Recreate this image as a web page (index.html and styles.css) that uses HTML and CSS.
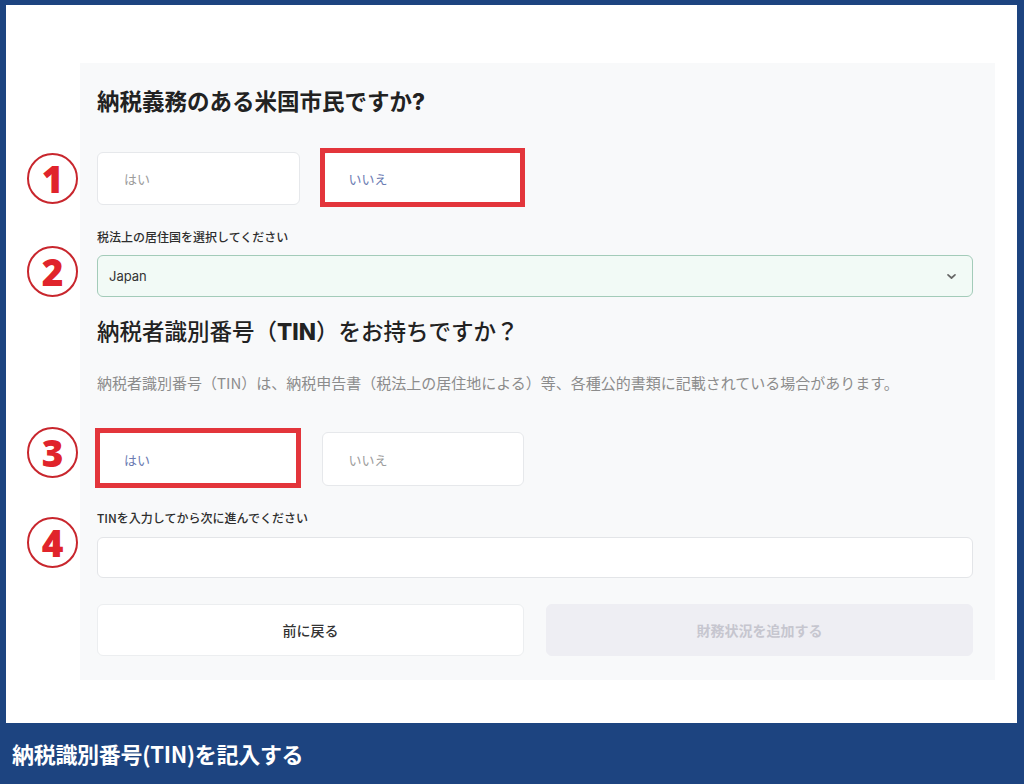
FILE: index.html
```html
<!DOCTYPE html>
<html lang="ja">
<head>
<meta charset="utf-8">
<title>納税識別番号(TIN)を記入する</title>
<link rel="stylesheet" href="styles.css">
</head>
<body>
<div class="frame">
  <main class="canvas">
    <section class="panel">
      <h1 class="q1">納税義務のある米国市民ですか<span class="qmark">?</span></h1>

      <div class="choices field">
        <span class="marker marker--one">1</span>
        <button class="choice">はい</button>
        <button class="choice is-picked">いいえ</button>
      </div>

      <div class="field">
        <span class="marker marker--two">2</span>
        <label class="label">税法上の居住国を選択してください</label>
        <div class="select">
          <span>Japan</span>
          <svg class="chev" width="11" height="7" viewBox="0 0 11 7"><path d="M2 1.8 L5.5 5 L9 1.8" fill="none" stroke="#666" stroke-width="1.7" stroke-linecap="round" stroke-linejoin="round"/></svg>
        </div>
      </div>

      <h2 class="q2">納税者識別番号（<b>TIN</b>）をお持ちですか？</h2>
      <p class="desc">納税者識別番号（TIN）は、納税申告書（税法上の居住地による）等、各種公的書類に記載されている場合があります。</p>

      <div class="choices choices--tin field">
        <span class="marker marker--three">3</span>
        <button class="choice is-picked">はい</button>
        <button class="choice">いいえ</button>
      </div>

      <div class="field">
        <span class="marker marker--four">4</span>
        <label class="label">TINを入力してから次に進んでください</label>
        <div class="input"></div>
      </div>

      <div class="actions">
        <button class="btn btn--back">前に戻る</button>
        <button class="btn btn--next">財務状況を追加する</button>
      </div>
    </section>
  </main>
  <footer class="bar">納税識別番号(TIN)を記入する</footer>
</div>
</body>
</html>
```

FILE: styles.css
```css
html, body {
  margin: 0;
  padding: 0;
}
body {
  width: 1024px;
  height: 784px;
  overflow: hidden;
  font-family: "Inter", "Noto Sans CJK JP", sans-serif;
  color: #222;
}
.frame {
  width: 1024px;
  height: 784px;
  box-sizing: border-box;
  background: #1d4480;
  padding: 5px 7px 0 6px;
  display: flex;
  flex-direction: column;
}
.canvas {
  height: 718px;
  background: #ffffff;
  padding: 58px 0 0 74px;
  box-sizing: border-box;
}
.panel {
  width: 915px;
  height: 617px;
  box-sizing: border-box;
  background: #f8f9fa;
  padding: 22px 22px 24px 17px;
}
.q1 {
  margin: 0;
  height: 30px;
  font-family: "Noto Sans CJK JP", sans-serif;
  font-size: 22.5px;
  line-height: 30px;
  font-weight: 700;
  color: #222;
}
.qmark {
  font-family: "Inter", sans-serif;
  font-weight: 800;
  line-height: 1;
}
.field {
  position: relative;
}
.choices {
  display: grid;
  grid-template-columns: repeat(4, 1fr);
  column-gap: 22px;
  margin-top: 37px;
  height: 53px;
}
.choices--tin {
  margin-top: 39px;
  height: 54px;
}
.choice {
  position: relative;
  margin: 0;
  padding: 0 0 0 26px;
  text-align: left;
  background: #ffffff;
  border: 1px solid #e6e8eb;
  border-radius: 6px;
  font-family: "Noto Sans CJK JP", sans-serif;
  font-size: 13px;
  color: #9c9c9c;
}
.choice.is-picked {
  color: #6b7bb2;
}
.choice.is-picked::after {
  content: "";
  position: absolute;
  top: -5px;
  bottom: -3px;
  left: -3px;
  right: -2px;
  border: 5px solid #e3353b;
}
.marker {
  position: absolute;
  left: -70px;
  width: 51px;
  height: 51px;
  box-sizing: border-box;
  border: 2.5px solid #c8262d;
  border-radius: 50%;
  background: #ffffff;
  display: flex;
  align-items: center;
  justify-content: center;
  font-family: "Noto Sans", "Liberation Sans", sans-serif;
  font-weight: 900;
  font-size: 37px;
  line-height: 1;
  color: #e0242b;
}
.marker--one { top: 1px; }
.marker--two { top: 17px; }
.marker--three { top: -5px; }
.marker--four { top: 7px; }
.label {
  display: block;
  margin-top: 25px;
  font-family: "Noto Sans CJK JP", sans-serif;
  font-size: 12px;
  line-height: 16px;
  font-weight: 500;
  color: #2e2e2e;
}
.select {
  margin-top: 10px;
  height: 42px;
  box-sizing: border-box;
  border: 1px solid #a3cbb9;
  border-radius: 6px;
  background: #f2faf6;
  display: flex;
  align-items: center;
  justify-content: space-between;
  padding: 0 15px 0 11px;
  font-size: 13px;
  color: #333;
}
.q2 {
  margin: 18px 0 0;
  height: 30px;
  font-family: "Noto Sans CJK JP", sans-serif;
  font-size: 22.5px;
  line-height: 30px;
  font-weight: 500;
  color: #222;
}
.q2 b {
  font-family: "Inter", sans-serif;
  font-weight: 800;
  line-height: 1;
}
.desc {
  margin: 28px 0 0;
  height: 20px;
  font-family: "Noto Sans CJK JP", sans-serif;
  font-size: 15px;
  line-height: 20px;
  color: #8c8c8c;
  white-space: nowrap;
}
.choices + .field .label {
  margin-top: 24px;
}
.input {
  margin-top: 11px;
  height: 41px;
  box-sizing: border-box;
  background: #ffffff;
  border: 1px solid #e3e5e8;
  border-radius: 6px;
}
.actions {
  display: grid;
  grid-template-columns: 1fr 1fr;
  column-gap: 22px;
  margin-top: 26px;
  height: 52px;
}
.btn {
  margin: 0;
  border-radius: 6px;
  font-family: "Noto Sans CJK JP", sans-serif;
  font-size: 14px;
  font-weight: 500;
}
.btn--back {
  background: #ffffff;
  border: 1px solid #eceef0;
  color: #333;
}
.btn--next {
  background: #eeeef3;
  border: 1px solid #eeeef3;
  color: #c6c6cf;
  font-weight: 700;
}
.bar {
  height: 61px;
  line-height: 61px;
  padding-left: 6px;
  font-family: "Noto Sans CJK JP", sans-serif;
  font-size: 22px;
  font-weight: 700;
  color: #ffffff;
  letter-spacing: -0.3px;
}
```
